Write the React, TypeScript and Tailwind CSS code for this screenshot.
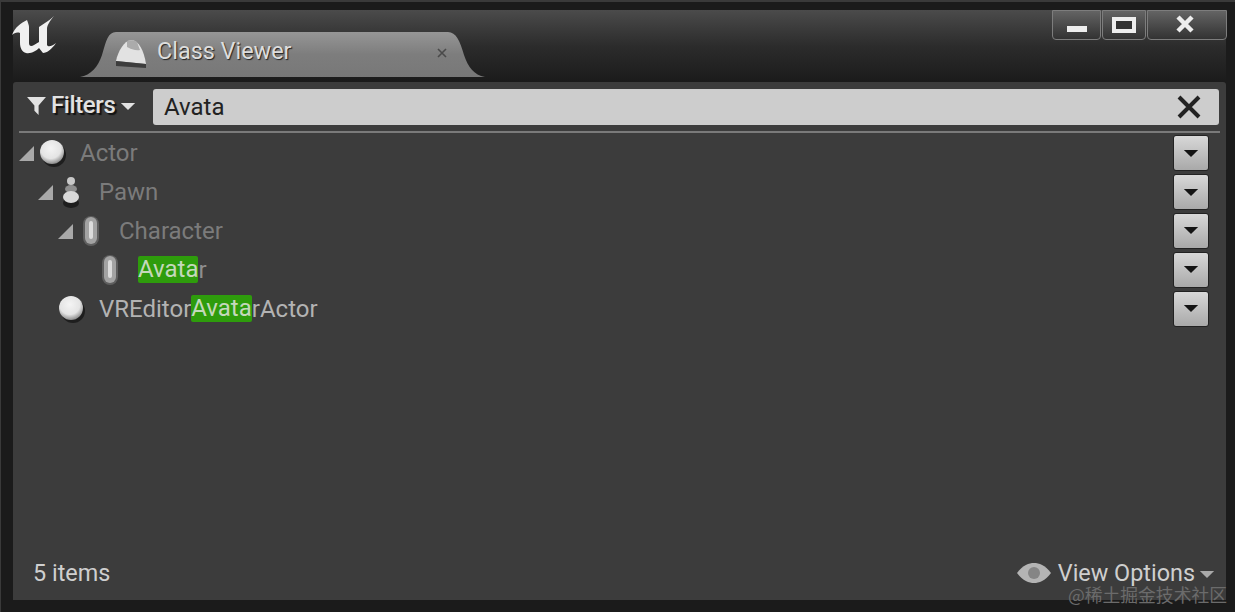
const rows = [
  { indent: "pl-[6px]", arrow: true, icon: "ball", before: "Actor", match: "", after: "", tone: "text-[#7b7b7b]" },
  { indent: "pl-[25px]", arrow: true, icon: "pawn", before: "Pawn", match: "", after: "", tone: "text-[#7b7b7b]" },
  { indent: "pl-[45px]", arrow: true, icon: "char", before: "Character", match: "", after: "", tone: "text-[#7b7b7b]" },
  { indent: "pl-[64px]", arrow: false, icon: "char", before: "", match: "Avata", after: "r", tone: "text-[#8e8e8e]" },
  { indent: "pl-[25px]", arrow: false, icon: "ball", before: "VREditor", match: "Avata", after: "rActor", tone: "text-[#b3b3b3]" },
];

function UnrealLogo() {
  return (
    <svg width="46" height="42" viewBox="0 0 46 42" className="shrink-0">
      <path
        d="M1 20C4 12 10 8 16 5C17 8 18 10 18 12L18 28C18 31 20 32 23 30L28 27L28 12C32 9 38 6 43 1C39 6 36 10 36 14L36 30C37 32 40 32 45 28C41 34 36 38 32 38L28 33C25 36 20 39 15 38C11 37 9 33 9 28L9 18C6 17 3 18 1 20Z"
        fill="#f0f0f0"
      />
    </svg>
  );
}

function BallIcon() {
  return (
    <svg width="30" height="30" viewBox="0 0 30 30">
      <defs>
        <radialGradient id="ball" cx="0.45" cy="0.35" r="0.65">
          <stop offset="0" stopColor="#f4f4f4" />
          <stop offset="0.65" stopColor="#e4e4e4" />
          <stop offset="1" stopColor="#8c8c8c" />
        </radialGradient>
      </defs>
      <circle cx="16" cy="17" r="12" fill="#1e1e1e" />
      <circle cx="14" cy="14" r="12" fill="url(#ball)" />
    </svg>
  );
}

function PawnIcon() {
  return (
    <svg width="20" height="34" viewBox="0 0 20 34">
      <ellipse cx="10" cy="28" rx="8" ry="5" fill="#1e1e1e" />
      <circle cx="10" cy="6" r="4" fill="#c8c8c8" />
      <ellipse cx="10" cy="14" rx="6" ry="4" fill="#8f8f8f" />
      <ellipse cx="10" cy="22" rx="8" ry="6" fill="#dadada" />
    </svg>
  );
}

function CharacterIcon() {
  return (
    <svg width="18" height="32" viewBox="0 0 18 32">
      <rect x="1" y="1" width="16" height="30" rx="8" fill="#5f5f5f" />
      <rect x="3" y="2" width="12" height="27" rx="6" fill="#a3a3a3" />
      <rect x="7" y="6" width="4" height="18" rx="2" fill="#dcdcdc" />
    </svg>
  );
}

function RowIcon({ icon }: { icon: string }) {
  if (icon === "ball") return <BallIcon />;
  if (icon === "pawn") return <div className="ml-[4px]"><PawnIcon /></div>;
  return <div className="ml-[5px]"><CharacterIcon /></div>;
}

function Chevron({ className }: { className: string }) {
  return (
    <svg width="18" height="10" viewBox="0 0 18 10" className={className}>
      <path d="M1 1H17L9 9Z" fill="currentColor" />
    </svg>
  );
}

function TreeRow({ row }: { row: (typeof rows)[number] }) {
  return (
    <div className="flex h-[38.8px] items-center justify-between pr-[17px]">
      <div className={`flex items-center ${row.indent}`}>
        <div className="flex w-[19px] justify-start pt-[1px]">
          {row.arrow && (
            <svg width="15" height="15" viewBox="0 0 15 15">
              <path d="M15 0V15H0Z" fill="#a9a9a9" />
            </svg>
          )}
        </div>
        <div className="flex w-[42px] shrink-0 items-center justify-start">
          <RowIcon icon={row.icon} />
        </div>
        <span className={`flex items-center text-[24px] leading-[32px] ${row.tone}`}>
          {row.before && <span>{row.before}</span>}
          {row.match && <span className="rounded-[2px] bg-[#2e9c0c] leading-[27px] text-[#c4d8bb]">{row.match}</span>}
          {row.after && <span>{row.after}</span>}
        </span>
      </div>
      <button className="flex h-[36px] w-[36px] items-center justify-center rounded-[3px] border border-[#222222] bg-gradient-to-b from-[#d8d8d8] to-[#a9a9a9] text-[#141414]">
        <Chevron className="h-[9px] w-[16px]" />
      </button>
    </div>
  );
}

function WindowButton({ width, children }: { width: string; children: React.ReactNode }) {
  return (
    <div className={`flex h-[30px] items-center justify-center rounded-b-[4px] border border-[#7d7d7d] bg-gradient-to-b from-[#646464] to-[#333333] ${width}`}>
      {children}
    </div>
  );
}

export default function App() {
  return (
    <div className="relative flex h-[612px] w-[1235px] flex-col overflow-hidden border-l border-t-2 border-[#3a3a3a] bg-[#1b1b1b] pb-[12px] pl-[12px] pr-[9px] pt-[8px] font-['Roboto',sans-serif]">
      <div className="flex h-[72px] shrink-0 items-start bg-gradient-to-b from-[#4b4b4b] via-[#2c2c2c] to-[#1b1b1b]">
        <div className="-ml-[2px] mt-[5px]">
          <UnrealLogo />
        </div>
        <div className="relative ml-[23px] mt-[21px] flex h-[47px] w-[405px] items-start pl-[35px] pt-[3px]">
          <svg width="405" height="47" viewBox="0 0 405 47" className="absolute left-0 top-0">
            <defs>
              <linearGradient id="tab" x1="0" y1="0" x2="0" y2="1">
                <stop offset="0" stopColor="#969696" />
                <stop offset="0.5" stopColor="#7d7d7d" />
                <stop offset="1" stopColor="#787878" />
              </linearGradient>
            </defs>
            <path d="M0 46C11 44 18 36 22 24C26 10 28 1 36 1H368C376 1 380 10 384 24C388 36 394 44 405 46Z" fill="url(#tab)" />
          </svg>
          <svg width="32" height="30" viewBox="0 0 32 30" className="relative mt-[5px]">
            <path d="M1 22C3 12 9 2 16 1C24 1 29 12 31 25Z" fill="#e2e2e2" />
            <path d="M1 22L31 25V29L1 27Z" fill="#3d3d3d" />
            <path d="M12 2C14 1 20 1 22 3L25 11C21 12 16 10 12 8Z" fill="#ababab" />
          </svg>
          <span className="relative ml-[10px] mt-[1px] text-[23.4px] leading-[32px] text-[#dddddd] [text-shadow:1px_1px_1px_#222222]">Class Viewer</span>
          <svg width="10" height="10" viewBox="0 0 10 10" className="absolute left-[357px] top-[17px]">
            <path d="M1 1L9 9M9 1L1 9" stroke="#4a4a4a" strokeWidth="1.6" />
          </svg>
        </div>
        <div className="ml-auto mr-[-1px] flex gap-[1px]">
          <WindowButton width="w-[49px]">
            <div className="mt-[8px] h-[6px] w-[20px] bg-[#eeeeee]" />
          </WindowButton>
          <WindowButton width="w-[44px]">
            <div className="h-[16px] w-[24px] border-[4px] border-[#eeeeee] bg-[#333333]" />
          </WindowButton>
          <WindowButton width="w-[80px]">
            <svg width="20" height="20" viewBox="0 0 20 20" className="-ml-[5px] -mt-[3px]">
              <path d="M3 3L17 17M17 3L3 17" stroke="#eeeeee" strokeWidth="4.5" />
            </svg>
          </WindowButton>
        </div>
      </div>

      <div className="flex min-h-0 flex-1 flex-col rounded-t-[3px] bg-[#3c3c3c]">
        <div className="flex h-[43px] shrink-0 items-end pl-[13px] pr-[7px]">
          <div className="mb-[4px] flex w-[127px] shrink-0 items-center text-[#e2e2e2] [text-shadow:2px_2px_1px_#111111]">
            <svg width="21" height="21" viewBox="0 0 20 20">
              <path d="M1 2H19L12 10V19L8 15V10Z" fill="#e2e2e2" />
            </svg>
            <span className="ml-[4px] text-[24px] font-medium leading-[32px] tracking-[-0.4px]">Filters</span>
            <Chevron className="ml-[5px] mt-[2px] h-[9px] w-[16px]" />
          </div>
          <div className="flex h-[36px] flex-1 items-center justify-between rounded-[3px] bg-[#cdcdcd] pl-[11px] pr-[18px]">
            <span className="text-[24px] leading-[32px] text-[#222222]">Avata</span>
            <svg width="24" height="24" viewBox="0 0 24 24">
              <path d="M2 2L22 22M22 2L2 22" stroke="#222222" strokeWidth="4" />
            </svg>
          </div>
        </div>
        <div className="mx-[6px] mt-[6px] h-[2px] shrink-0 bg-[#7a7a7a]" />
        <div className="flex flex-1 flex-col pt-[1px]">
          {rows.map((row) => (
            <TreeRow key={row.before + row.match} row={row} />
          ))}
        </div>
        <div className="flex h-[50px] shrink-0 items-start justify-between pl-[20px] pr-[11px] pt-[7px] text-[23.4px] leading-[32px] text-[#cfcfcf]">
          <span>5 items</span>
          <div className="flex items-center">
            <svg width="34" height="22" viewBox="0 0 34 22">
              <path d="M0 11C6 3 12 1 17 1C22 1 28 3 34 11C28 19 22 21 17 21C12 21 6 19 0 11Z" fill="#b4b4b4" />
              <circle cx="17" cy="11" r="6" fill="#858585" />
            </svg>
            <span className="ml-[7px]">View Options</span>
            <Chevron className="ml-[4px] mt-[2px] h-[9px] w-[16px] text-[#a9a9a9]" />
          </div>
        </div>
      </div>

      <span className="absolute bottom-[5px] right-[8px] font-['Noto_Sans_CJK_SC',sans-serif] text-[17.8px] leading-[26px] text-[#6b6b6b]">@稀土掘金技术社区</span>
    </div>
  );
}
